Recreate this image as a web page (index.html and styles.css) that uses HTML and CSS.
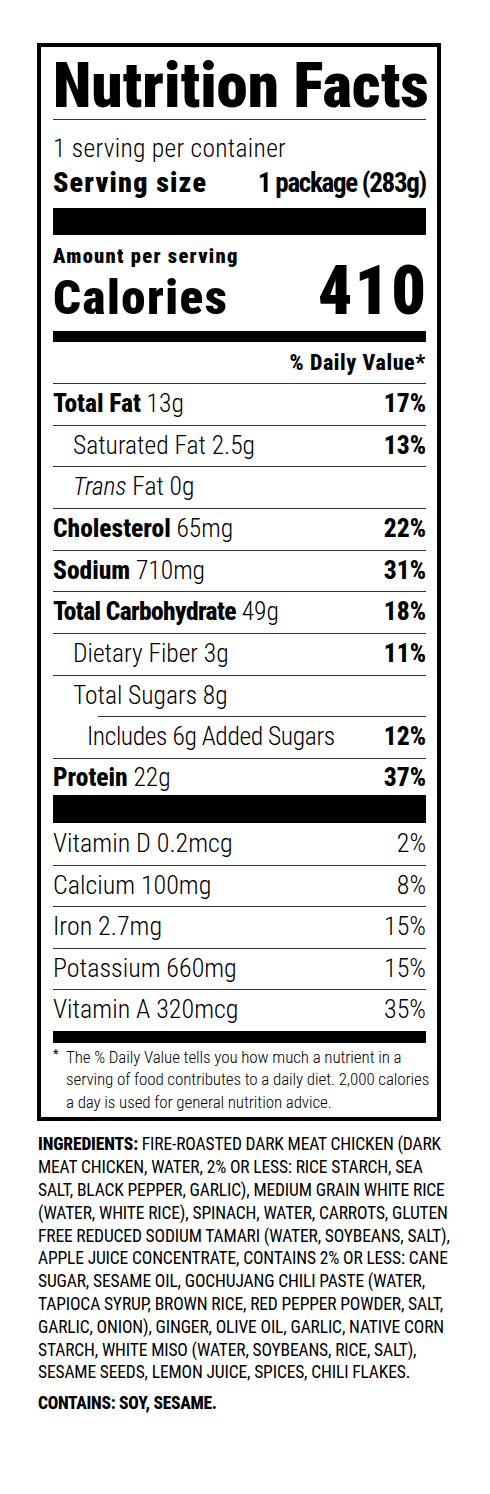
FILE: index.html
```html
<!DOCTYPE html>
<html lang="en">
<head>
<meta charset="utf-8">
<title>Nutrition Facts</title>
<link rel="stylesheet" href="styles.css">
</head>
<body>
<div class="label">
  <h1 class="title">Nutrition Facts</h1>
  <div class="servings">1 serving per container</div>
  <div class="serving-size"><span class="ss-label">Serving size</span><span class="ss-value">1 package (283g)</span></div>
  <div class="bar bar-thick"></div>
  <div class="amount">Amount per serving</div>
  <div class="calories"><span class="cal-label">Calories</span><span class="cal-num">410</span></div>
  <div class="bar bar-med"></div>
  <div class="dv-head">% Daily Value*</div>

  <div class="row"><span><b>Total Fat</b> 13g</span><b>17%</b></div>
  <div class="row"><span class="ind1">Saturated Fat 2.5g</span><b>13%</b></div>
  <div class="row"><span class="ind1"><i>Trans</i> Fat 0g</span></div>
  <div class="row"><span><b>Cholesterol</b> 65mg</span><b>22%</b></div>
  <div class="row"><span><b>Sodium</b> 710mg</span><b>31%</b></div>
  <div class="row"><span><b class="tight">Total Carbohydrate</b> 49g</span><b>18%</b></div>
  <div class="row"><span class="ind1">Dietary Fiber 3g</span><b>11%</b></div>
  <div class="row"><span class="ind1">Total Sugars 8g</span></div>
  <div class="sub-rule"></div>
  <div class="row row-sub"><span class="ind2">Includes 6g Added Sugars</span><b>12%</b></div>
  <div class="row row-protein"><span><b>Protein</b> 22g</span><b>37%</b></div>
  <div class="bar bar-thick2"></div>

  <div class="row vit first"><span>Vitamin D 0.2mcg</span><span>2%</span></div>
  <div class="row vit"><span>Calcium 100mg</span><span>8%</span></div>
  <div class="row vit"><span>Iron 2.7mg</span><span>15%</span></div>
  <div class="row vit"><span>Potassium 660mg</span><span>15%</span></div>
  <div class="row vit"><span>Vitamin A 320mcg</span><span>35%</span></div>
  <div class="bar bar-med2"></div>

  <div class="footnote">
    <span class="ast">*</span>
    <p class="foot-text">The % Daily Value tells you how much a nutrient in a<br>serving of food contributes to a daily diet. 2,000 calories<br>a day is used for general nutrition advice.</p>
  </div>
</div>

<div class="ingredients">
  <p class="ing-text"><b>INGREDIENTS:</b> FIRE-ROASTED DARK MEAT CHICKEN (DARK<br>MEAT CHICKEN, WATER, 2% OR LESS: RICE STARCH, SEA<br>SALT, BLACK PEPPER, GARLIC), MEDIUM GRAIN WHITE RICE<br>(WATER, WHITE RICE), SPINACH, WATER, CARROTS, GLUTEN<br>FREE REDUCED SODIUM TAMARI (WATER, SOYBEANS, SALT),<br>APPLE JUICE CONCENTRATE, CONTAINS 2% OR LESS: CANE<br>SUGAR, SESAME OIL, GOCHUJANG CHILI PASTE (WATER,<br>TAPIOCA SYRUP, BROWN RICE, RED PEPPER POWDER, SALT,<br>GARLIC, ONION), GINGER, OLIVE OIL, GARLIC, NATIVE CORN<br>STARCH, WHITE MISO (WATER, SOYBEANS, RICE, SALT),<br>SESAME SEEDS, LEMON JUICE, SPICES, CHILI FLAKES.</p>
  <p class="contains">CONTAINS: SOY, SESAME.</p>
</div>
</body>
</html>
```

FILE: styles.css
```css
* { box-sizing: border-box; }

body {
  margin: 0;
  background: #fff;
  color: #000;
  font-family: "Roboto Condensed", Roboto, sans-serif;
  font-stretch: 75%;
}

.label {
  margin: 43px 0 0 37px;
  width: 404px;
  border: 4px solid #000;
  padding: 0 11px 0 12px;
}

.title {
  margin: 0;
  padding-top: 5px;
  font-size: 63px;
  line-height: 67px;
  font-weight: 900;
  border-bottom: 1px solid #333;
  white-space: nowrap;
}

.servings {
  padding-top: 8px;
  font-size: 25.5px;
  line-height: 40px;
  font-weight: 300;
  letter-spacing: 0.3px;
}

.serving-size {
  display: flex;
  justify-content: space-between;
  align-items: baseline;
  line-height: 30px;
  margin-bottom: 10px;
}

.ss-label {
  font-size: 28px;
  font-weight: 900;
  letter-spacing: 1.2px;
}

.ss-value {
  font-size: 27px;
  font-weight: 700;
  letter-spacing: -1.3px;
}

.bar { background: #000; }
.bar-thick { height: 27px; }
.bar-thick2 { height: 28px; }
.bar-med { height: 11px; }
.bar-med2 { height: 12px; }

.amount {
  padding-top: 9px;
  font-size: 20.5px;
  line-height: 24px;
  font-weight: 900;
  letter-spacing: 1.3px;
}

.calories {
  display: flex;
  justify-content: space-between;
  align-items: baseline;
  height: 63px;
  font-weight: 900;
}

.cal-label {
  font-size: 49px;
  line-height: 47px;
  letter-spacing: 1.5px;
}

.cal-num {
  font-size: 68px;
  line-height: 47px;
  letter-spacing: 2px;
  margin-right: -2px;
}

.dv-head {
  text-align: right;
  font-size: 22px;
  line-height: 41px;
  font-weight: 800;
  letter-spacing: 0.6px;
}

.row {
  display: flex;
  justify-content: space-between;
  align-items: flex-start;
  height: 41.67px;
  border-top: 1px solid #333;
  font-size: 25.5px;
  line-height: 38px;
  font-weight: 300;
}

.row b {
  font-weight: 800;
}

.row b.tight {
  letter-spacing: -0.6px;
}

.row i { font-style: italic; }

.ind1 { padding-left: 20px; }
.ind2 { padding-left: 34px; letter-spacing: -0.4px; }

.sub-rule {
  height: 1px;
  margin-left: 45px;
  background: #333;
}

.row-sub {
  border-top: 0;
  height: 40.67px;
}

.row-protein {
  height: 37px;
  line-height: 36px;
}

.vit {
  height: 41.6px;
  font-size: 26px;
}

.vit.first {
  border-top: 0;
  line-height: 40px;
}

.footnote {
  display: flex;
  padding: 3px 0 4px;
}

.ast {
  width: 13px;
  flex: none;
  font-size: 13px;
  line-height: 16px;
}

.foot-text {
  margin: 0;
  font-size: 17px;
  line-height: 22.5px;
  font-weight: 300;
  letter-spacing: -0.1px;
  white-space: nowrap;
}

.ingredients {
  margin: 12px 0 0 38px;
  width: 402px;
}

.ing-text {
  margin: 0;
  font-size: 17.5px;
  line-height: 22.8px;
  font-weight: 400;
  letter-spacing: -0.15px;
  white-space: nowrap;
}

.ing-text b, .contains {
  font-weight: 800;
}

.contains {
  margin: 8px 0 0;
  font-size: 17.5px;
  line-height: 22.8px;
  letter-spacing: -0.3px;
}
```
